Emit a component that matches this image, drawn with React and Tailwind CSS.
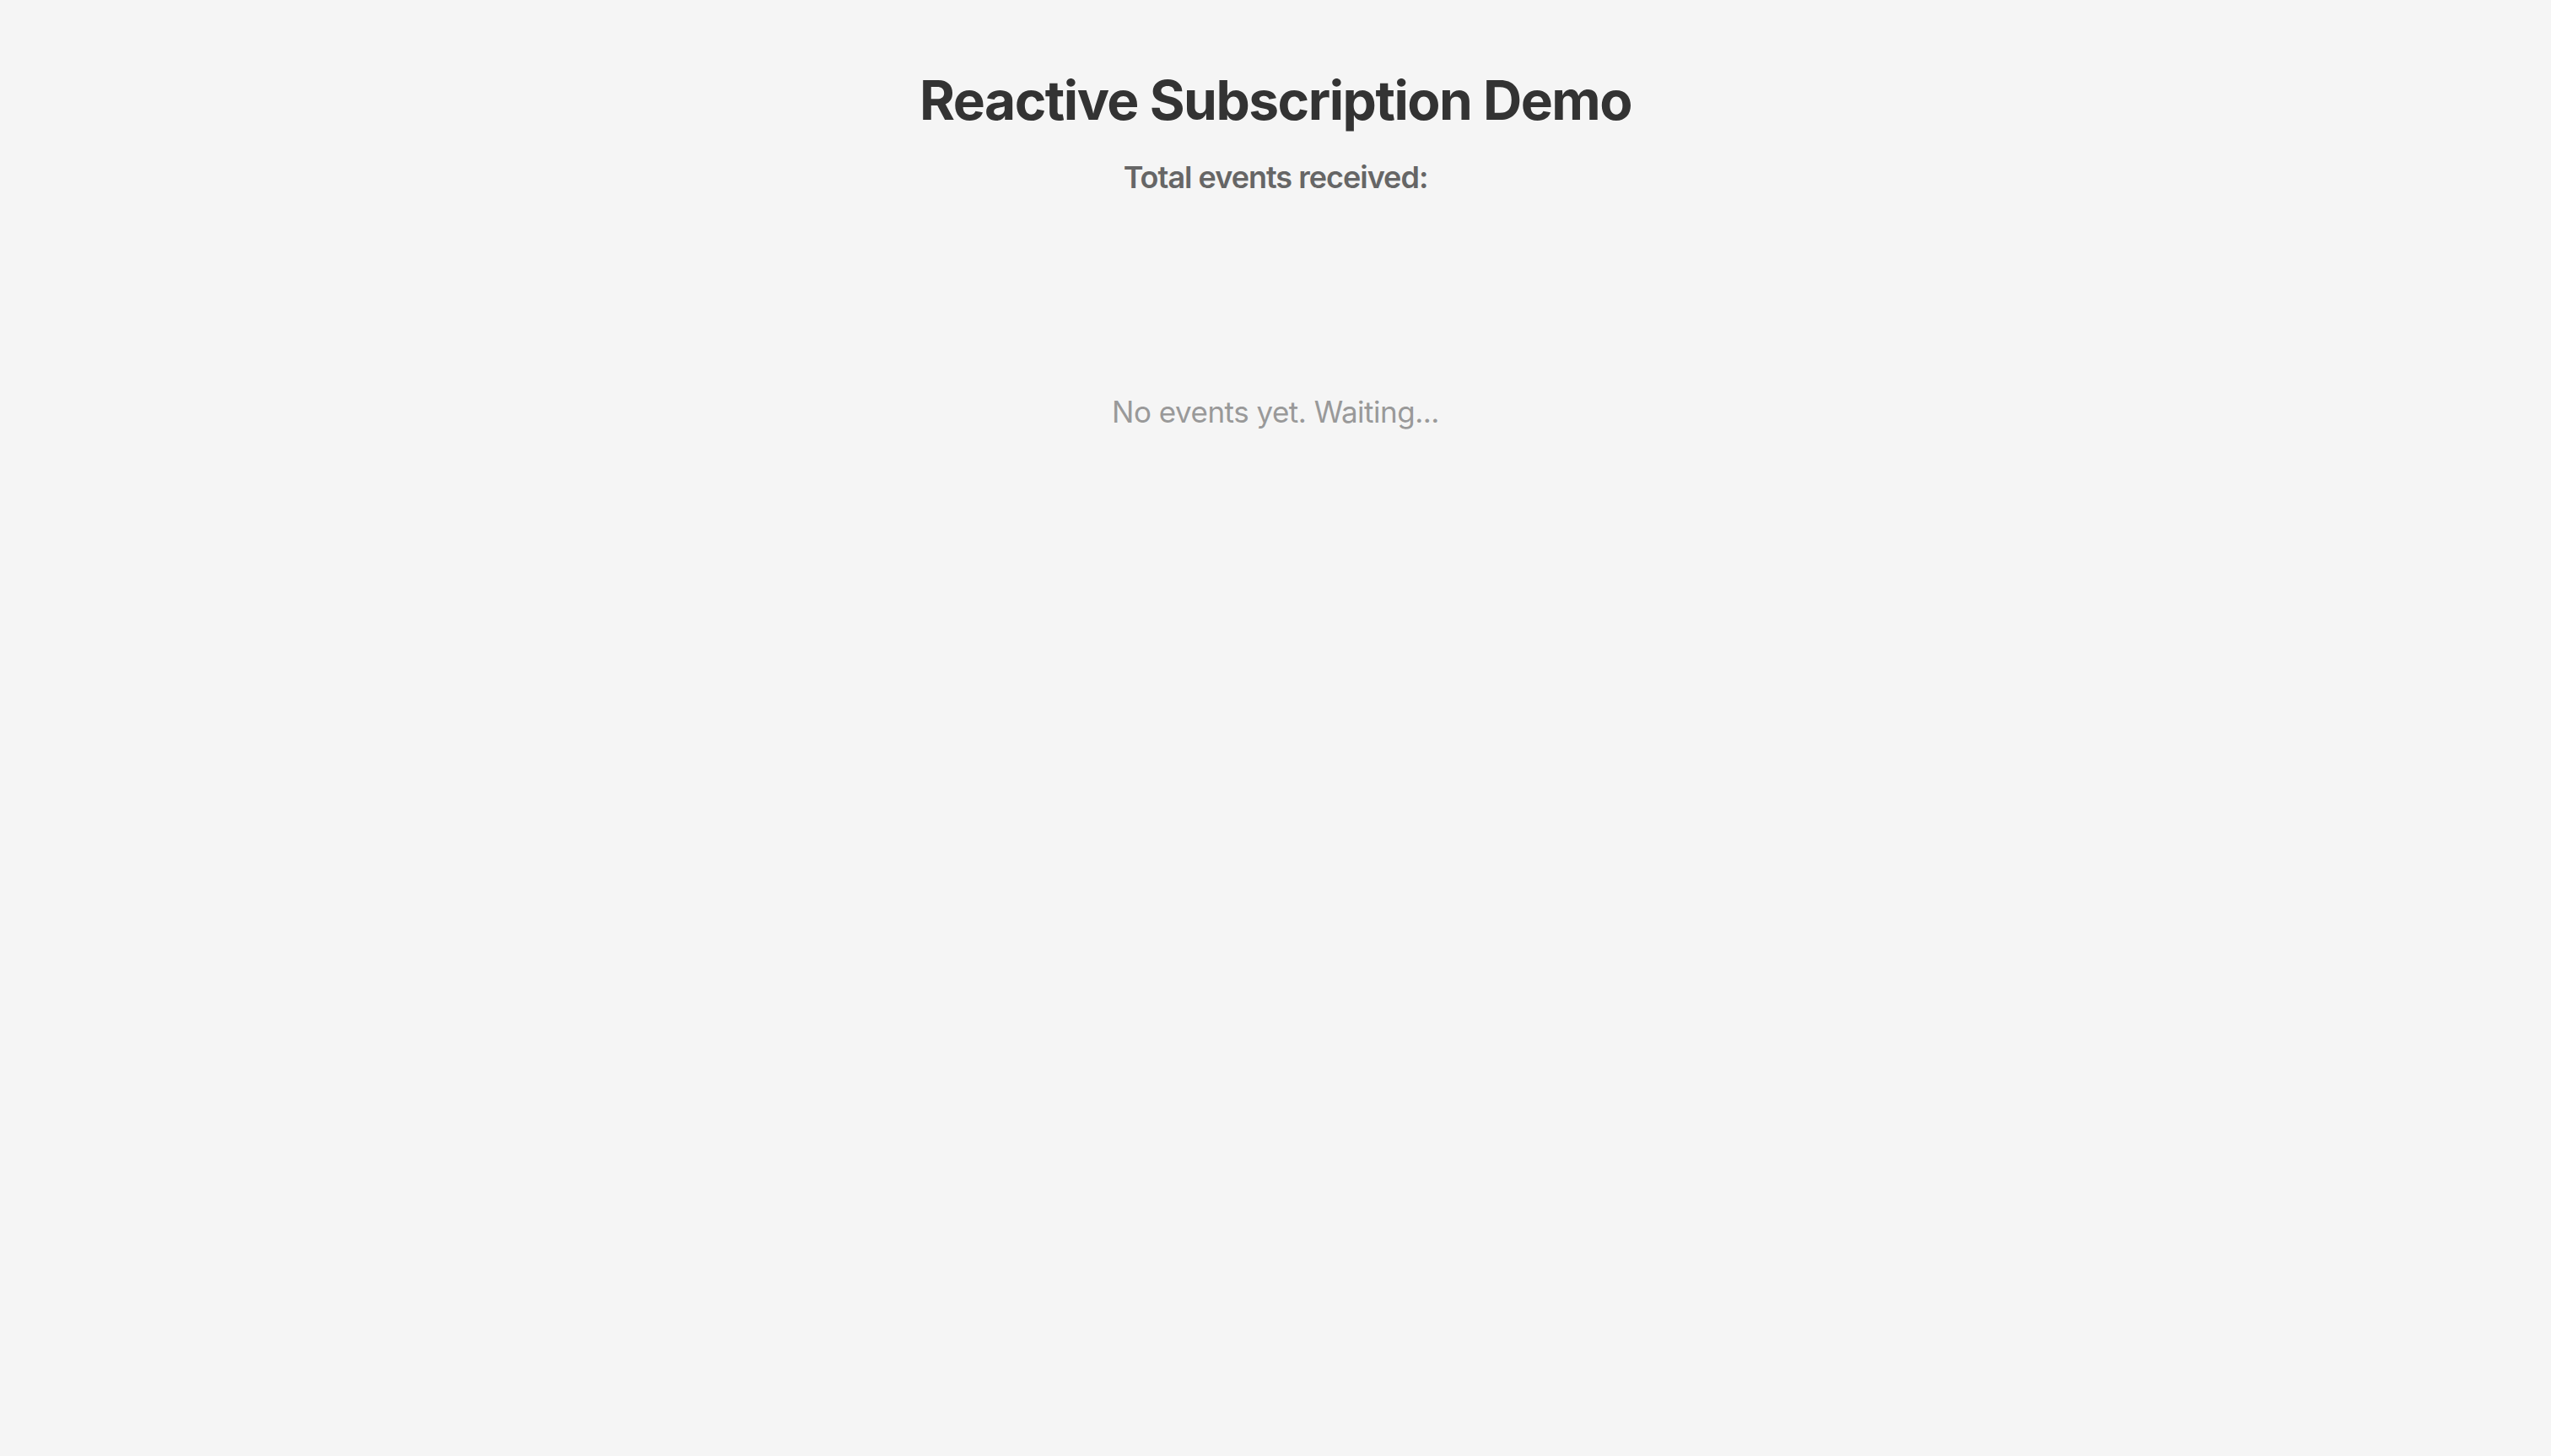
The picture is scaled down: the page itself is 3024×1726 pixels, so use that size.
export default function App() {
  return (
    <div className="min-h-screen w-full bg-[#f5f5f5] flex flex-col items-center" style={{ fontFamily: 'Inter, "Noto Sans", sans-serif' }}>
      <h1 className="mt-[80px] text-[64px] leading-[77px] font-bold text-[#333333] tracking-[-1.5px]">Reactive Subscription Demo</h1>
      <p className="mt-[31px] text-[36px] leading-[44px] font-semibold text-[#666666] tracking-[-1px]">Total events received:</p>
      <p className="mt-[235px] text-[35px] leading-[42px] font-normal text-[#999999] tracking-[-0.5px]">No events yet. Waiting...</p>
    </div>
  );
}
